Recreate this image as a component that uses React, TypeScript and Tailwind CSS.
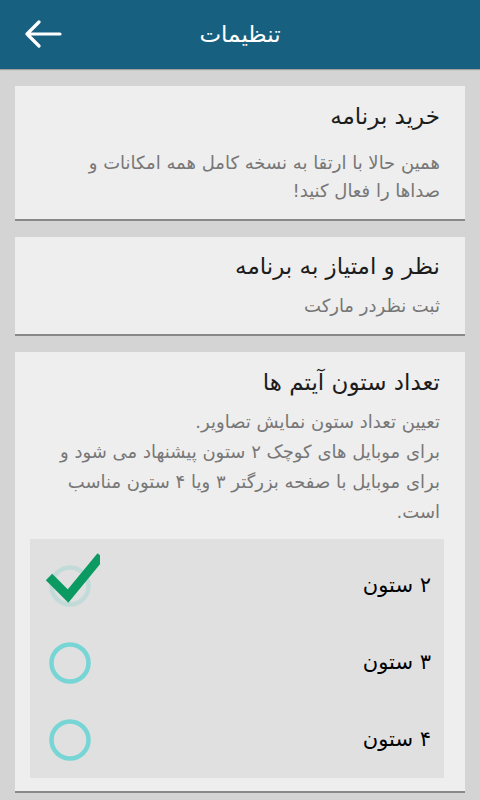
import React from "react";

const font = { fontFamily: '"DejaVu Sans", sans-serif' };

function Radio({ checked }: { checked: boolean }) {
  return (
    <svg width="70" height="60" viewBox="0 0 70 60" className="shrink-0">
      <circle cx="40" cy="38" r="18.5" fill="none" stroke={checked ? "#c2dbd9" : "#77d5d6"} strokeWidth="4.5" />
      {checked && (
        <polyline points="19,29 38,48 71,8" fill="none" stroke="#0b9b62" strokeWidth="9" strokeLinejoin="miter" />
      )}
    </svg>
  );
}

function Option({ label, checked }: { label: string; checked?: boolean }) {
  return (
    <div className="flex h-[77px] items-center justify-between pr-[13px]">
      <div className="text-[21px] text-black">{label}</div>
      <div className="-mt-[15px]">
        <Radio checked={!!checked} />
      </div>
    </div>
  );
}

export default function App() {
  return (
    <div dir="rtl" style={font} className="min-h-[800px] w-[480px] bg-[#d4d4d4] overflow-hidden">
      <div className="relative flex h-[69px] items-center justify-center bg-[#17607f] shadow-[0_1px_1px_rgba(0,0,0,0.25)]">
        <div className="text-[23px] text-white">تنظیمات</div>
        <svg className="absolute left-[24px] top-[20px]" width="38" height="30" viewBox="0 0 38 30">
          <path d="M36 14 H3 M15 2 L3 14 L15 26" fill="none" stroke="white" strokeWidth="3.2" strokeLinecap="round" strokeLinejoin="round" />
        </svg>
      </div>

      <div className="flex flex-col gap-4 px-[15px] pt-[17px]">
        <div className="border-b-2 border-[#888888] bg-[#eeeeee] pr-[25px] pl-4 pt-[15px] pb-[14px] whitespace-nowrap">
          <div className="text-[23px] leading-[30px] text-[#1c1c1c]">خرید برنامه</div>
          <div className="mt-[18px] text-[18px] leading-[28px] text-[#777777]">
            <div>همین حالا با ارتقا به نسخه کامل همه امکانات و</div>
            <div>صداها را فعال کنید!</div>
          </div>
        </div>

        <div className="border-b-2 border-[#888888] bg-[#eeeeee] pr-[25px] pl-4 pt-[14px] pb-[14px] whitespace-nowrap">
          <div className="text-[23px] leading-[30px] text-[#1c1c1c]">نظر و امتیاز به برنامه</div>
          <div className="mt-[11px] text-[18px] leading-[28px] text-[#777777]">ثبت نظردر مارکت</div>
        </div>

        <div className="border-b-2 border-[#888888] bg-[#eeeeee] pr-[25px] pl-[15px] pt-[15px] pb-[13px] whitespace-nowrap">
          <div className="text-[23px] leading-[30px] text-[#1c1c1c]">تعداد ستون آیتم ها</div>
          <div className="mt-[10px] text-[18px] leading-[30px] text-[#777777]">
            <div>تعیین تعداد ستون نمایش تصاویر.</div>
            <div>برای موبایل های کوچک ۲ ستون پیشنهاد می شود و</div>
            <div>برای موبایل با صفحه بزرگتر ۳ ویا ۴ ستون مناسب</div>
            <div>است.</div>
          </div>
          <div className="-mr-[4px] mt-[12px] bg-[#e0e0e0] pt-2">
            <Option label="۲ ستون" checked />
            <Option label="۳ ستون" />
            <Option label="۴ ستون" />
          </div>
        </div>
      </div>
    </div>
  );
}
